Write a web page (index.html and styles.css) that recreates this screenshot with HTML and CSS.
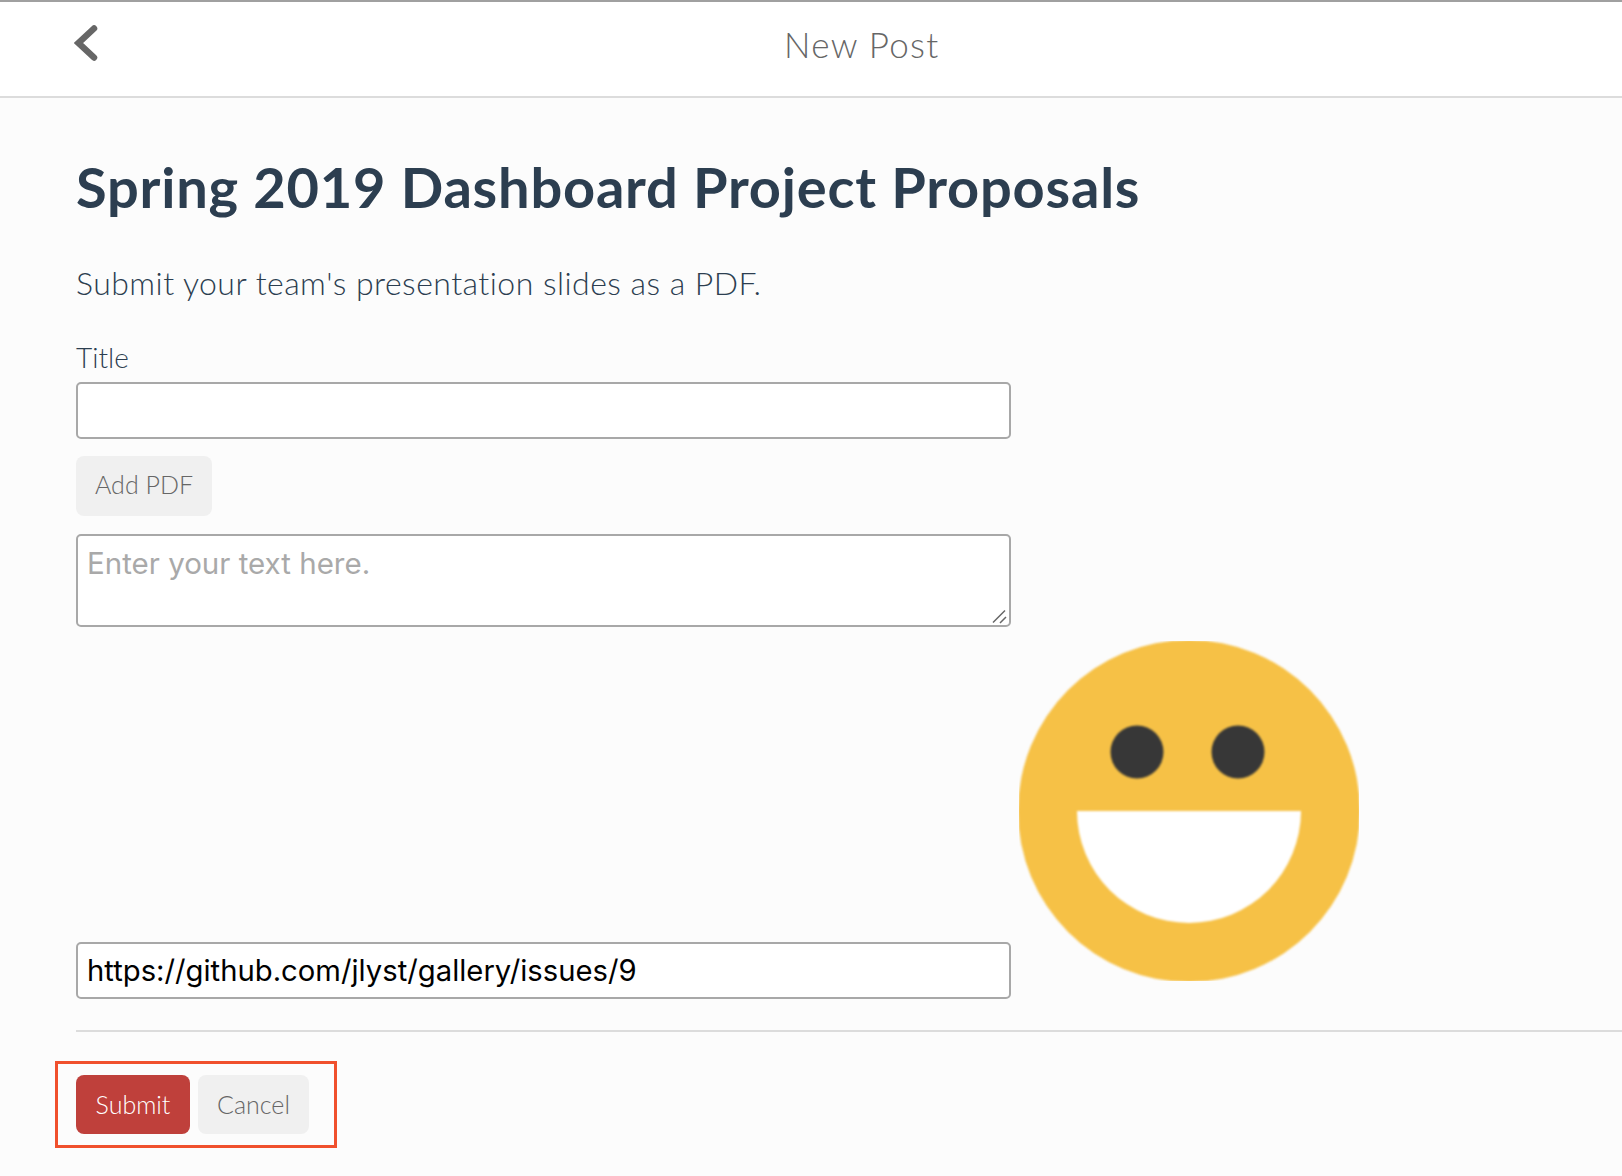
FILE: index.html
```html
<!DOCTYPE html>
<html lang="en">
<head>
<meta charset="utf-8">
<title>New Post</title>
<link rel="stylesheet" href="styles.css">
</head>
<body>
<header class="topbar">
  <a class="back" aria-label="Back">
    <svg class="back-icon" width="24" height="36" viewBox="0 0 24 36"><path d="M20 3.500 4.500 18 20 32.500" fill="none" stroke="#666" stroke-width="6.500" stroke-linecap="round" stroke-linejoin="miter"/></svg>
  </a>
  <div class="topbar-title">New Post</div>
</header>
<main class="content">
  <h1 class="heading">Spring 2019 Dashboard Project Proposals</h1>
  <p class="lead">Submit your team's presentation slides as a PDF.</p>
  <label class="field-label" for="title">Title</label>
  <input class="text-input" id="title" type="text">
  <button class="btn btn-grey btn-add" type="button">Add PDF</button>
  <div class="area-wrap">
    <textarea class="text-area" placeholder="Enter your text here."></textarea>
    <svg class="grip" width="16" height="16" viewBox="0 0 16 16"><path d="M2 14.500 14 2.500M9 15 15 9" fill="none" stroke="#666" stroke-width="1.500"/></svg>
  </div>
  <div class="media-row">
    <div class="media-field">
      <input class="text-input url-input" type="text" value="https://github.com/jlyst/gallery/issues/9">
    </div>
    <svg class="smiley" width="340" height="340" viewBox="0 0 340 340">
      <g class="smiley-art">
        <circle cx="170" cy="170" r="171" fill="#f6c146"/>
        <circle cx="118" cy="111" r="26.500" fill="#373737"/>
        <circle cx="219" cy="111" r="26.500" fill="#373737"/>
        <path d="M58 170H282A112 112 0 0 1 58 170Z" fill="#fff"/>
      </g>
    </svg>
  </div>
  <hr class="rule">
  <div class="actions">
    <button class="btn btn-red" type="button">Submit</button>
    <button class="btn btn-grey" type="button">Cancel</button>
  </div>
</main>
</body>
</html>
```
FILE: styles.css
```css
*, *::before, *::after { box-sizing: border-box; }
html, body { margin: 0; padding: 0; }
body {
  width: 1622px;
  height: 1176px;
  overflow: hidden;
  background: #fcfcfc;
  font-family: "Lato", "Noto Sans", sans-serif;
  font-variant-ligatures: none;
  color: #2c3e50;
}
.topbar {
  height: 98px;
  background: #fff;
  border-top: 2px solid #a0a0a0;
  border-bottom: 2px solid #dcdcdc;
  display: grid;
  grid-template-columns: 710px auto 1fr;
  align-items: center;
  padding-left: 74px;
}
.back { grid-column: 1; justify-self: start; height: 36px; margin-top: -12px; }
.back-icon { display: block; }
.topbar-title {
  grid-column: 2;
  font-size: 35px;
  font-weight: 300;
  color: #666;
  letter-spacing: 1.300px;
  margin-top: -10px;
}
.content { padding: 56px 0 0 76px; }
.heading {
  margin: 0;
  font-size: 56px;
  line-height: 66px;
  font-weight: 700;
  letter-spacing: 0.780px;
  color: #2c3e50;
}
.lead {
  margin: 43px 0 0;
  font-size: 32px;
  line-height: 40px;
  font-weight: 300;
  letter-spacing: 0.460px;
}
.field-label {
  display: block;
  margin-top: 37px;
  font-size: 28px;
  line-height: 34px;
  font-weight: 300;
}
.text-input, .text-area {
  display: block;
  width: 935px;
  border: 2px solid #a8a8a8;
  border-radius: 5px;
  background: #fff;
  padding: 0 9px;
  font-family: "Inter", sans-serif;
  font-size: 29.500px;
  color: #000;
  outline: none;
  margin: 0;
}
.text-input { height: 57px; }
.url-input { font-size: 29.250px; }
#title { margin-top: 8px; }
.area-wrap {
  position: relative;
  width: 935px;
  margin-top: 18px;
}
.text-area {
  height: 93px;
  padding-top: 7px;
  line-height: 40px;
  resize: none;
}
.text-area::placeholder { color: #a9a9a9; opacity: 1; }
.grip {
  position: absolute;
  right: 4px;
  bottom: 3px;
}
.btn {
  display: block;
  border: 0;
  border-radius: 8px;
  padding: 0 19px 2px;
  height: 59px;
  font-family: "Lato", sans-serif;
  font-size: 25px;
  font-weight: 300;
}
.btn-grey { background: #f0f0f0; color: #666; }
.btn-red { background: #bf403b; color: #fff; width: 114px; }
.btn-add { margin-top: 17px; width: 136px; height: 60px; padding-bottom: 4px; }
.media-row {
  display: flex;
  align-items: flex-start;
  gap: 8px;
  margin-top: 14px;
}
.media-field { padding-top: 301px; }
.smiley-art { filter: blur(1px); }
.rule {
  border: 0;
  border-top: 2px solid #dcdcdc;
  margin: 31px 0 0;
}
.actions {
  display: flex;
  gap: 8px;
  margin-top: 43px;
  position: relative;
}
.actions .btn-grey { width: 111px; }
.actions::before {
  content: "";
  position: absolute;
  left: -21px;
  top: -14px;
  width: 282px;
  height: 87px;
  border: 3px solid #f0502d;
}
```
